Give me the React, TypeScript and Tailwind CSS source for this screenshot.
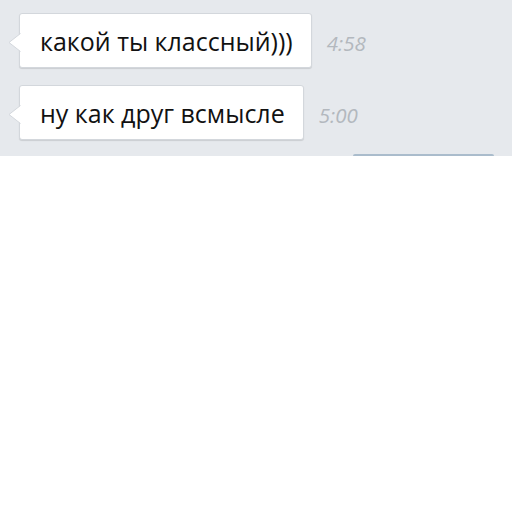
export default function App() {
  const msgs = [
    { text: "какой ты классный)))", time: "4:58" },
    { text: "ну как друг всмысле", time: "5:00" },
  ];
  return (
    <div className="w-[512px] h-[512px] bg-white" style={{ fontFamily: '"Open Sans", "Noto Sans", sans-serif' }}>
      <div className="relative h-[156px] bg-[#e6e9ed] pt-[13px] pl-[19px] flex flex-col gap-[17px]">
        {msgs.map((m, i) => (
          <div key={i} className="flex items-center">
            <div className="relative h-[55px] flex items-center pl-[20px] pr-[18px] bg-white rounded-[3px] border border-[#d3d7dc] shadow-[0_1px_1px_rgba(0,0,0,0.12)]">
              <svg className="absolute left-[-12px] top-[19px]" width="13" height="19" viewBox="0 0 13 19">
                <path d="M13 0 L1 9.5 L13 19 Z" fill="white" />
                <path d="M12.5 0.5 L1 9.5 L12.5 18.5" fill="none" stroke="#d3d7dc" strokeWidth="1" />
              </svg>
              <span className="text-[25px] text-[#111] leading-none whitespace-nowrap translate-y-[1px]">{m.text}</span>
            </div>
            <span className="ml-[15px] mt-[5px] text-[20.5px] italic text-[#b3b8be]">{m.time}</span>
          </div>
        ))}
        <div className="absolute left-[353px] w-[141px] bottom-0 h-[2px] bg-[#aabccc] rounded-t" />
      </div>
    </div>
  );
}
